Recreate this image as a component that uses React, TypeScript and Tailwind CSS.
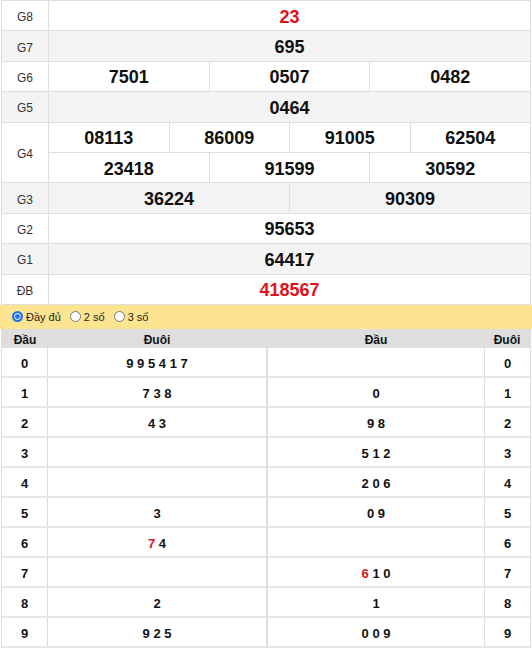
import React from "react";

const RED = "text-[#e3101b]";

function PrizeRow({ label, nums, gray, red }: { label: string; nums: string[]; gray: boolean; red?: boolean }) {
  return (
    <div className={`flex h-[30.4px] border-b border-[#dedede] ${gray ? "bg-[#f3f3f3]" : "bg-white"}`}>
      <div className="w-[47px] shrink-0 border-r border-[#dedede] flex items-center justify-center pt-[3px] text-[12px] text-[#333]">
        {label}
      </div>
      <div className="flex-1 flex">
        {nums.map((n, i) => (
          <div
            key={i}
            className={`flex-1 flex items-center justify-center pt-[3px] text-[18px] font-bold ${red ? RED : "text-[#111]"} ${i > 0 ? "border-l border-[#dedede]" : ""}`}
          >
            {n}
          </div>
        ))}
      </div>
    </div>
  );
}

function LotoCell({ text, redFirst }: { text: string; redFirst?: boolean }) {
  const parts = text.split(" ").filter(Boolean);
  return (
    <span className="whitespace-pre">
      {parts.map((p, i) => (
        <React.Fragment key={i}>
          {i > 0 ? " " : ""}
          <span className={i === 0 && redFirst ? RED : ""}>{p}</span>
        </React.Fragment>
      ))}
    </span>
  );
}

const leftData: { d: string; t: string; red?: boolean }[] = [
  { d: "0", t: "9 9 5 4 1 7" },
  { d: "1", t: "7 3 8" },
  { d: "2", t: "4 3" },
  { d: "3", t: "" },
  { d: "4", t: "" },
  { d: "5", t: "3" },
  { d: "6", t: "7 4", red: true },
  { d: "7", t: "" },
  { d: "8", t: "2" },
  { d: "9", t: "9 2 5" },
];

const rightData: { d: string; t: string; red?: boolean }[] = [
  { d: "0", t: "" },
  { d: "1", t: "0" },
  { d: "2", t: "9 8" },
  { d: "3", t: "5 1 2" },
  { d: "4", t: "2 0 6" },
  { d: "5", t: "0 9" },
  { d: "6", t: "" },
  { d: "7", t: "6 1 0", red: true },
  { d: "8", t: "1" },
  { d: "9", t: "0 0 9" },
];

function Radio({ checked, label }: { checked?: boolean; label: string }) {
  return (
    <label className="flex items-center gap-[3px] mr-[9px]">
      {checked ? (
        <span className="w-[11px] h-[11px] rounded-full bg-[#1a73e8] flex items-center justify-center">
          <span className="w-[7px] h-[7px] rounded-full border-[1.5px] border-white bg-[#1a73e8]" />
        </span>
      ) : (
        <span className="w-[11px] h-[11px] rounded-full border border-[#767676] bg-white" />
      )}
      <span>{label}</span>
    </label>
  );
}

export default function App() {
  return (
    <div className="w-[532px] bg-white" style={{ fontFamily: '"Liberation Sans", Arial, sans-serif' }}>
      <div className="mx-[1px] border-t border-x border-[#dedede]">
        <PrizeRow label="G8" nums={["23"]} gray={false} red />
        <PrizeRow label="G7" nums={["695"]} gray />
        <PrizeRow label="G6" nums={["7501", "0507", "0482"]} gray={false} />
        <PrizeRow label="G5" nums={["0464"]} gray />
        <div className="flex bg-white">
          <div className="w-[47px] shrink-0 border-r border-b border-[#dedede] flex items-center justify-center pt-[3px] text-[12px] text-[#333]">
            G4
          </div>
          <div className="flex-1 flex flex-col">
            {[
              ["08113", "86009", "91005", "62504"],
              ["23418", "91599", "30592"],
            ].map((r, ri) => (
              <div key={ri} className="flex h-[30.4px] border-b border-[#dedede]">
                {r.map((n, i) => (
                  <div
                    key={i}
                    className={`flex-1 flex items-center justify-center pt-[3px] text-[18px] font-bold text-[#111] ${i > 0 ? "border-l border-[#dedede]" : ""}`}
                  >
                    {n}
                  </div>
                ))}
              </div>
            ))}
          </div>
        </div>
        <PrizeRow label="G3" nums={["36224", "90309"]} gray />
        <PrizeRow label="G2" nums={["95653"]} gray={false} />
        <PrizeRow label="G1" nums={["64417"]} gray />
        <PrizeRow label="ĐB" nums={["418567"]} gray={false} red />
      </div>

      <div className="h-[24px] bg-[#fde490] flex items-center pl-[12px] text-[11px] text-[#222]">
        <Radio checked label="Đầy đủ" />
        <Radio label="2 số" />
        <Radio label="3 số" />
      </div>

      <div className="flex">
        <div className="w-[266px] border-l border-r border-[#dedede] ml-[1px]">
          <div className="flex h-[19px] bg-[#dedede] text-[12px] font-bold text-[#111] pt-[3px]">
            <div className="w-[46px] flex items-center justify-center">Đầu</div>
            <div className="flex-1 flex items-center justify-center">Đuôi</div>
          </div>
          {leftData.map((r) => (
            <div key={r.d} className="flex h-[30px] border-b-2 border-[#e6e6e6] text-[13px] font-bold text-[#111]">
              <div className="w-[46px] border-r border-[#dedede] flex items-center justify-center pt-[3px]">{r.d}</div>
              <div className="flex-1 flex items-center justify-center pt-[3px]">
                <LotoCell text={r.t} redFirst={r.red} />
              </div>
            </div>
          ))}
        </div>
        <div className="flex-1 border-l border-r border-[#dedede] mr-[1px]">
          <div className="flex h-[19px] bg-[#dedede] text-[12px] font-bold text-[#111] pt-[3px]">
            <div className="flex-1 flex items-center justify-center">Đầu</div>
            <div className="w-[46px] flex items-center justify-center">Đuôi</div>
          </div>
          {rightData.map((r) => (
            <div key={r.d} className="flex h-[30px] border-b-2 border-[#e6e6e6] text-[13px] font-bold text-[#111]">
              <div className="flex-1 flex items-center justify-center pt-[3px]">
                <LotoCell text={r.t} redFirst={r.red} />
              </div>
              <div className="w-[46px] border-l border-[#dedede] flex items-center justify-center pt-[3px]">{r.d}</div>
            </div>
          ))}
        </div>
      </div>
    </div>
  );
}
